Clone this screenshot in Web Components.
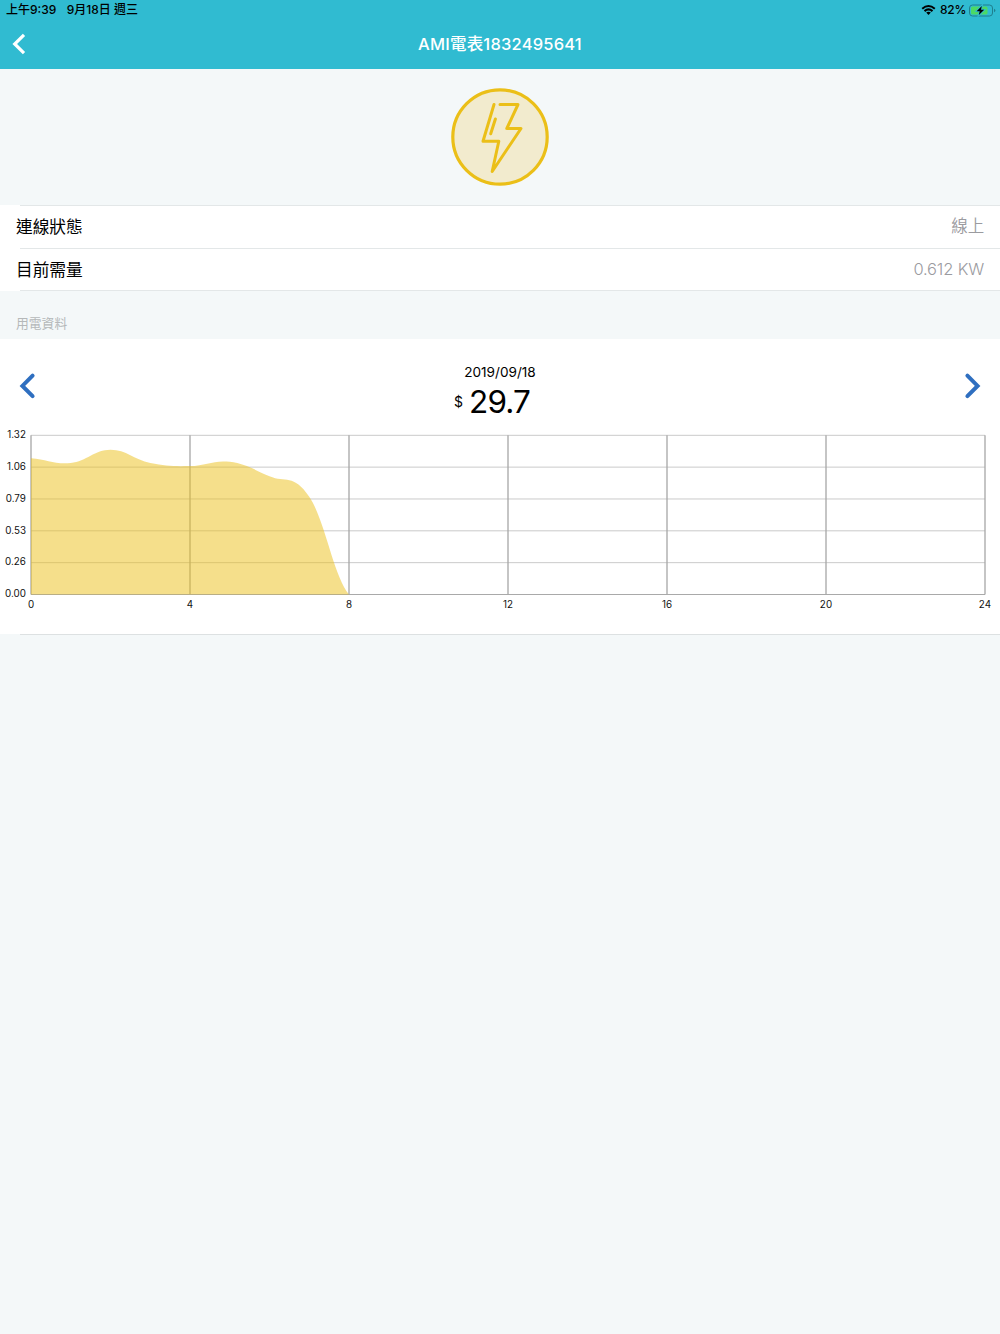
<!DOCTYPE html>
<html lang="zh-Hant">
<head>
<meta charset="utf-8">
<meta name="viewport" content="width=device-width, initial-scale=1">
<title>AMI電表1832495641</title>
<style>
  body {
    margin: 0;
    min-height: 100vh;
    background: #f4f8f9;
    color: #000;
    font-family: Inter, "Noto Sans CJK TC", sans-serif;
  }
</style>
</head>
<body>
<meter-page>
  <status-bar slot="header" time="上午9:39" date="9月18日 週三" battery="82"></status-bar>
  <nav-header slot="header">AMI電表1832495641</nav-header>
  <device-hero></device-hero>
  <info-row label="連線狀態">線上</info-row>
  <info-row label="目前需量" last>0.612 KW</info-row>
  <section-title>用電資料</section-title>
  <usage-panel>
    <day-picker date="2019/09/18" cost="29.7"></day-picker>
    <usage-chart max="1.32" values="1.13,1.09,1.2,1.09,1.065,1.1,0.98,0.81,0"></usage-chart>
  </usage-panel>
</meter-page>

<script>
class MeterPage extends HTMLElement {
  connectedCallback() {
    this.attachShadow({ mode: "open" });
    this.shadowRoot.innerHTML = `
      <style>
        :host {
          display: flex;
          flex-direction: column;
        }
        header {
          height: 69px;
          background: #30bbd1;
        }
      </style>
      <header><slot name="header"></slot></header>
      <slot></slot>
    `;
  }
}

class StatusBar extends HTMLElement {
  connectedCallback() {
    this.attachShadow({ mode: "open" });
    this.shadowRoot.innerHTML = `
      <style>
        :host {
          display: flex;
          justify-content: space-between;
          align-items: center;
          box-sizing: border-box;
          height: 20px;
          padding: 0 4px 0 6px;
          font-size: 12px;
          font-weight: 500;
          line-height: 20px;
        }
        div {
          display: flex;
          align-items: center;
        }
        .left { gap: 10.5px; }
        .percent { letter-spacing: -0.3px; }
        .wifi { margin-right: 4px; }
        .battery { margin-left: 3px; }
        svg { display: block; }
      </style>
      <div class="left">
        <span>${this.getAttribute("time")}</span>
        <span>${this.getAttribute("date")}</span>
      </div>
      <div>
        <svg class="wifi" width="15" height="12" viewBox="0 0 15 12">
          <g fill="none" stroke="#000" stroke-width="2.1">
            <path d="M1.2 4.7 Q7.5 -0.7 13.8 4.7"/>
            <path d="M3.5 7.1 Q7.5 3.7 11.5 7.1"/>
          </g>
          <path d="M5.2 8.6 Q7.5 7 9.8 8.6 L7.5 11Z"/>
        </svg>
        <span class="percent">${this.getAttribute("battery")}%</span>
        <svg class="battery" width="27" height="13" viewBox="0 0 27 13">
          <rect x="0.5" y="1" width="23" height="11" rx="3" fill="none" stroke="#1f7f8e"/>
          <rect x="2" y="2.5" width="16.5" height="8" rx="1.5" fill="#4cd964"/>
          <path d="M25 4.7 Q26.4 5.4 26.4 6.5 Q26.4 7.6 25 8.3Z" fill="#1f7f8e"/>
          <path d="M12.8 2 L7.6 7.2 H10.7 L9.8 11 L15.2 5.8 H12Z" fill="#000" stroke="#30bbd1" stroke-width="1.8" paint-order="stroke"/>
        </svg>
      </div>
    `;
  }
}

class NavHeader extends HTMLElement {
  connectedCallback() {
    this.attachShadow({ mode: "open" });
    this.shadowRoot.innerHTML = `
      <style>
        :host {
          display: grid;
          grid-template-columns: 40px 1fr 40px;
          align-items: center;
          height: 48px;
          color: #fff;
        }
        svg { display: block; margin-left: 11px; }
        h1 {
          margin: 0;
          font-size: 16.5px;
          font-weight: 500;
          line-height: 24px;
          letter-spacing: 0.2px;
          text-align: center;
          white-space: nowrap;
        }
      </style>
      <svg width="16" height="24" viewBox="0 0 16 24">
        <path d="M13 2.8 L3.7 12 L13 21.2" fill="none" stroke="#fff" stroke-width="3.2"/>
      </svg>
      <h1><slot></slot></h1>
    `;
  }
}

class DeviceHero extends HTMLElement {
  connectedCallback() {
    this.attachShadow({ mode: "open" });
    this.shadowRoot.innerHTML = `
      <style>
        :host {
          display: flex;
          justify-content: center;
          align-items: center;
          height: 136px;
        }
        svg { display: block; }
      </style>
      <svg width="100" height="100" viewBox="0 0 100 100">
        <circle cx="50" cy="50" r="47.2" fill="#f2ebce" stroke="#ebbf18" stroke-width="3.2"/>
        <g fill="none" stroke="#ebbf18" stroke-width="3" stroke-linecap="round" stroke-linejoin="round">
          <path d="M50 17.5 H68 L56.8 41.5 H71 L42.2 84.5 L48.8 54.3 H33 L44 17.5"/>
          <path d="M45.4 32 L40.7 46.7"/>
        </g>
      </svg>
    `;
  }
}

class InfoRow extends HTMLElement {
  connectedCallback() {
    this.attachShadow({ mode: "open" });
    this.shadowRoot.innerHTML = `
      <style>
        :host {
          display: flex;
          justify-content: space-between;
          align-items: center;
          box-sizing: border-box;
          height: 43px;
          padding: 0 16px;
          background:
            linear-gradient(#e3e7e8, #e3e7e8) 20px 0 / 100% 1px no-repeat,
            #fff;
          font-size: 16.7px;
          line-height: 24px;
        }
        :host([last]) {
          background:
            linear-gradient(#e3e7e8, #e3e7e8) 20px 0 / 100% 1px no-repeat,
            linear-gradient(#e3e7e8, #e3e7e8) 20px 100% / 100% 1px no-repeat,
            #fff;
        }
        .value {
          padding-bottom: 1px;
          color: #9b9b9f;
          font-size: 16.5px;
          font-weight: 350;
          letter-spacing: -0.15px;
        }
      </style>
      <span>${this.getAttribute("label")}</span>
      <span class="value"><slot></slot></span>
    `;
  }
}

class SectionTitle extends HTMLElement {
  connectedCallback() {
    this.attachShadow({ mode: "open" });
    this.shadowRoot.innerHTML = `
      <style>
        :host {
          display: block;
          box-sizing: border-box;
          height: 48px;
          padding: 23px 16px 0;
          color: #b5b8b9;
          font-size: 12.8px;
          line-height: 20px;
        }
      </style>
      <slot></slot>
    `;
  }
}

class UsagePanel extends HTMLElement {
  connectedCallback() {
    this.attachShadow({ mode: "open" });
    this.shadowRoot.innerHTML = `
      <style>
        :host {
          display: block;
          height: 296px;
          background:
            linear-gradient(#dde1e2, #dde1e2) 20px 295px / 100% 1px no-repeat,
            linear-gradient(#fff, #fff) 0 0 / 100% 295px no-repeat;
        }
      </style>
      <slot></slot>
    `;
  }
}

class DayPicker extends HTMLElement {
  connectedCallback() {
    this.attachShadow({ mode: "open" });
    this.shadowRoot.innerHTML = `
      <style>
        :host {
          display: flex;
          justify-content: space-between;
          align-items: center;
          box-sizing: border-box;
          height: 88px;
          padding: 6px 18px 0;
        }
        svg { display: block; }
        .center {
          display: flex;
          flex-direction: column;
          align-items: center;
          padding-top: 14px;
        }
        .date { font-size: 13.6px; line-height: 18px; }
        .cost {
          display: flex;
          align-items: center;
          gap: 6px;
          margin-right: 16px;
          font-size: 31.5px;
          line-height: 42px;
          letter-spacing: -0.9px;
        }
        .cost small { font-size: 14px; letter-spacing: 0; }
      </style>
      <svg width="20" height="30" viewBox="0 0 20 30">
        <path d="M14.6 4.6 L4.4 14.9 L14.6 25.2" fill="none" stroke="#2f6fc0" stroke-width="4" stroke-linecap="round"/>
      </svg>
      <div class="center">
        <div class="date">${this.getAttribute("date")}</div>
        <div class="cost"><small>$</small><span>${this.getAttribute("cost")}</span></div>
      </div>
      <svg width="20" height="30" viewBox="0 0 20 30">
        <path d="M5.4 4.6 L15.6 14.9 L5.4 25.2" fill="none" stroke="#2f6fc0" stroke-width="4" stroke-linecap="round"/>
      </svg>
    `;
  }
}

class UsageChart extends HTMLElement {
  connectedCallback() {
    this.attachShadow({ mode: "open" });

    this.left = 31;
    this.top = 8.3;
    this.plotWidth = 954;
    this.plotHeight = 159.2;
    this.max = Number(this.getAttribute("max"));
    this.values = this.getAttribute("values").split(",").map(Number);

    this.render();
  }

  x(hour) {
    return this.left + (hour / 24) * this.plotWidth;
  }

  y(value) {
    return this.top + this.plotHeight * (1 - value / this.max);
  }

  // cubic spline through the hourly values, closed along the baseline
  areaPath() {
    let v = this.values;
    let slope = (i) => {
      let a = v[Math.max(i - 1, 0)];
      let b = v[Math.min(i + 1, v.length - 1)];
      return (b - a) / 2;
    };
    let d = `M${this.x(0)} ${this.y(0)} V${this.y(v[0])}`;
    for (let i = 1; i < v.length; i++) {
      let c1 = v[i - 1] + slope(i - 1) * 0.4;
      let c2 = v[i] - slope(i) * 0.4;
      d += ` C${this.x(i - 0.6)} ${this.y(c1)} ${this.x(i - 0.4)} ${this.y(c2)} ${this.x(i)} ${this.y(v[i])}`;
    }
    return d + "Z";
  }

  render() {
    let rows = "";
    for (let i = 0; i <= 5; i++) {
      let value = (this.max / 5) * i;
      let y = this.y(value);
      rows += `<path d="M${this.left} ${y} H985" stroke="${i ? "#cacaca" : "#a9a9a9"}"/>
        <text x="26" y="${y + 2.8}" text-anchor="end">${value.toFixed(2)}</text>`;
    }

    let columns = "";
    for (let hour = 0; hour <= 24; hour += 4) {
      let x = this.x(hour);
      columns += `<path d="M${x} ${this.top} V${this.y(0)}" stroke="#a6a6a6" stroke-width="1.3"/>
        <text x="${x}" y="181" text-anchor="middle">${hour}</text>`;
    }

    this.shadowRoot.innerHTML = `
      <style>
        :host { display: block; height: 195px; }
        svg { display: block; }
        text { font-size: 9.8px; fill: #111; letter-spacing: 0.05px; }
      </style>
      <svg width="1000" height="195" viewBox="0 0 1000 195">
        ${rows}
        ${columns}
        <path d="${this.areaPath()}" fill="#ebbf18" fill-opacity="0.5"/>
      </svg>
    `;
  }
}

customElements.define("meter-page", MeterPage);
customElements.define("status-bar", StatusBar);
customElements.define("nav-header", NavHeader);
customElements.define("device-hero", DeviceHero);
customElements.define("info-row", InfoRow);
customElements.define("section-title", SectionTitle);
customElements.define("usage-panel", UsagePanel);
customElements.define("day-picker", DayPicker);
customElements.define("usage-chart", UsageChart);
</script>
</body>
</html>
